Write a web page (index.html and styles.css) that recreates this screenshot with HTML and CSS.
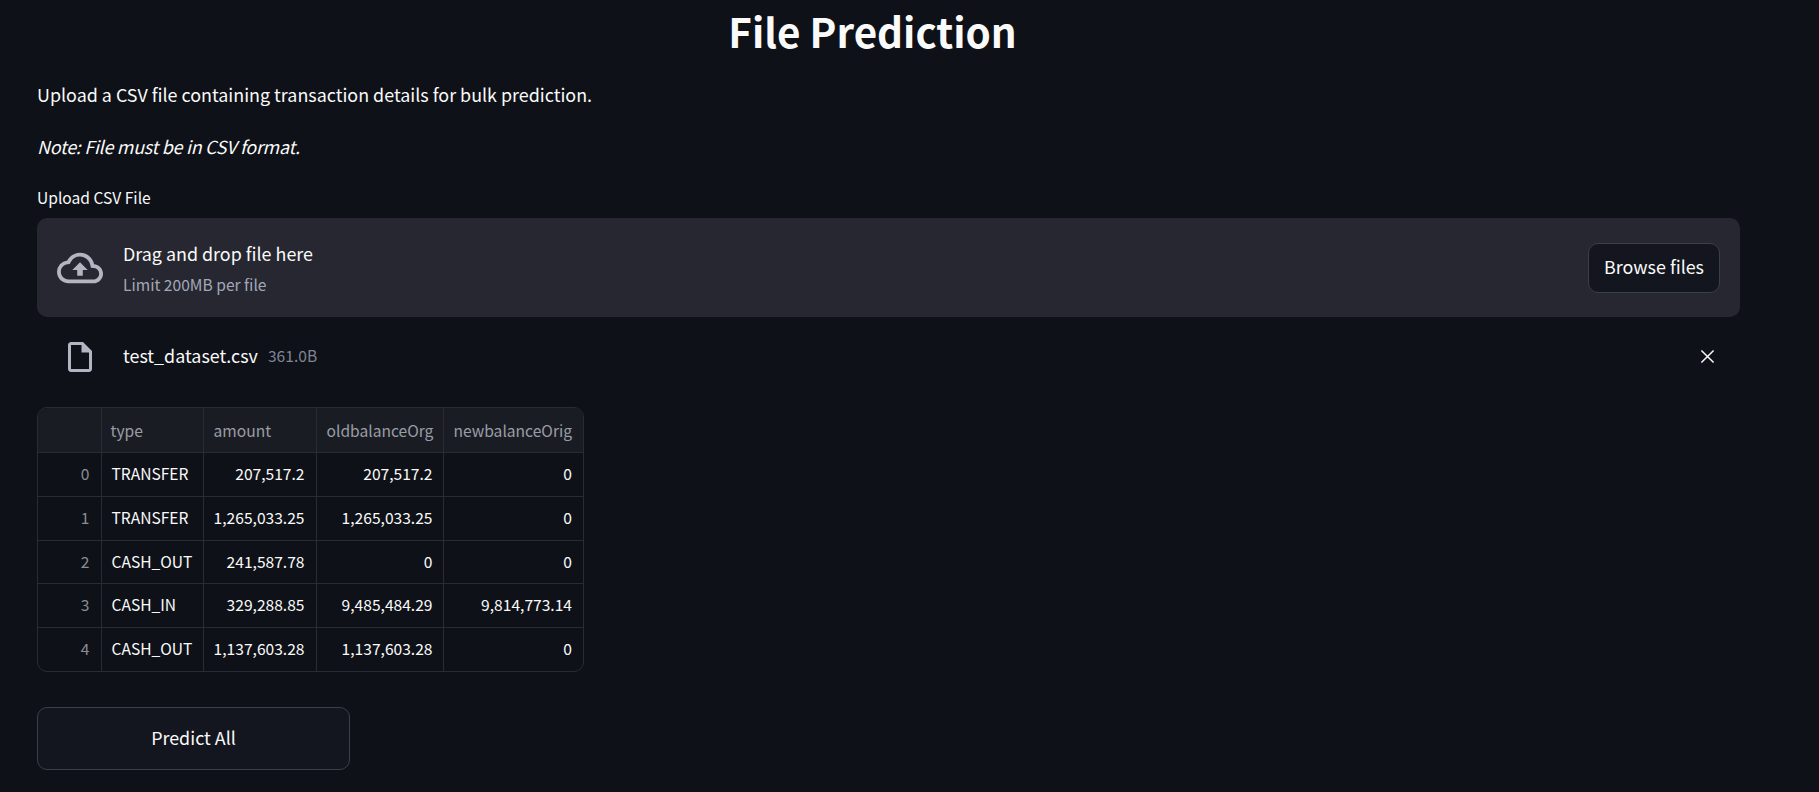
FILE: index.html
```html
<!DOCTYPE html>
<html>
<head>
  <title>File Prediction</title>
  <link rel="stylesheet" href="styles.css">
</head>
<body>
  <div class="container">
    <h1>File Prediction</h1>
    <p class="intro">Upload a CSV file containing transaction details for bulk prediction.</p>
    <p class="note">Note: File must be in CSV format.</p>

    <div class="upload-label">Upload CSV File</div>
    <div class="dropzone">
      <svg class="cloud-icon" viewBox="0 0 24 24" fill="#b3b6c2">
        <path d="M19.35 10.04A7.49 7.49 0 0 0 12 4C9.11 4 6.6 5.64 5.35 8.04A5.994 5.994 0 0 0 0 14c0 3.31 2.69 6 6 6h13c2.76 0 5-2.24 5-5 0-2.64-2.05-4.78-4.65-4.96zM19 18H6c-2.21 0-4-1.79-4-4 0-2.05 1.53-3.76 3.56-3.97l1.07-.11.5-.95A5.469 5.469 0 0 1 12 6c2.62 0 4.88 1.86 5.39 4.43l.3 1.5 1.53.11A2.98 2.98 0 0 1 22 15c0 1.65-1.35 3-3 3zM8 13h2.55v3h2.9v-3H16l-4-4z"/>
      </svg>
      <div class="drop-text">
        <div class="drop-title">Drag and drop file here</div>
        <div class="drop-limit">Limit 200MB per file</div>
      </div>
      <button class="browse-btn">Browse files</button>
    </div>

    <div class="file-row">
      <svg class="file-icon" viewBox="0 0 24 24" fill="#b3b6c2">
        <path d="M14 2H6c-1.1 0-2 .9-2 2v16c0 1.1.9 2 2 2h12c1.1 0 2-.9 2-2V8l-6-6zM6 20V4h7v5h5v11H6z"/>
      </svg>
      <span class="file-name">test_dataset.csv</span>
      <span class="file-size">361.0B</span>
      <svg class="close-icon" viewBox="0 0 16 16" stroke="#fafafa" stroke-width="1.6" fill="none">
        <path d="M1.5 1.5l13 13M14.5 1.5l-13 13"/>
      </svg>
    </div>

    <div class="table-wrap">
      <table class="data-table">
        <colgroup>
          <col class="col-index"><col class="col-type"><col class="col-amount"><col class="col-old"><col class="col-new">
        </colgroup>
        <thead>
          <tr><th></th><th>type</th><th>amount</th><th>oldbalanceOrg</th><th>newbalanceOrig</th></tr>
        </thead>
        <tbody>
          <tr><td class="idx">0</td><td>TRANSFER</td><td class="num">207,517.2</td><td class="num">207,517.2</td><td class="num">0</td></tr>
          <tr><td class="idx">1</td><td>TRANSFER</td><td class="num">1,265,033.25</td><td class="num">1,265,033.25</td><td class="num">0</td></tr>
          <tr class="short-row"><td class="idx">2</td><td>CASH_OUT</td><td class="num">241,587.78</td><td class="num">0</td><td class="num">0</td></tr>
          <tr><td class="idx">3</td><td>CASH_IN</td><td class="num">329,288.85</td><td class="num">9,485,484.29</td><td class="num">9,814,773.14</td></tr>
          <tr><td class="idx">4</td><td>CASH_OUT</td><td class="num">1,137,603.28</td><td class="num">1,137,603.28</td><td class="num">0</td></tr>
        </tbody>
      </table>
    </div>

    <button class="predict-btn">Predict All</button>
  </div>
</body>
</html>
```

FILE: styles.css
```css
body {
  background-color: #0e1117;
  color: #fafafa;
  font-family: "Noto Sans CJK SC", "Noto Sans", sans-serif;
  margin: 0;
  padding: 0;
  height: 792px;
  overflow: hidden;
}

.container {
  width: 1703px;
  margin-left: 37px;
}

h1 {
  margin: 0;
  height: 66px;
  line-height: 62px;
  padding-right: 32px;
  font-size: 40.4px;
  font-weight: 700;
  text-align: center;
}

.intro,
.note {
  margin: 0;
  font-size: 17.9px;
  line-height: 28px;
}

.intro {
  padding-top: 14px;
}

.note {
  padding-top: 24px;
  font-style: italic;
  letter-spacing: -0.25px;
}

.upload-label {
  font-size: 15.6px;
  line-height: 24px;
  margin-top: 25px;
  margin-bottom: 9px;
}

.dropzone {
  display: flex;
  align-items: center;
  height: 99px;
  box-sizing: border-box;
  padding: 0 20px 0 20px;
  background-color: #262730;
  border-radius: 10px;
}

.cloud-icon {
  width: 46px;
  height: 46px;
  flex-shrink: 0;
}

.drop-text {
  margin-left: 20px;
  flex: 1;
}

.drop-title {
  font-size: 17.9px;
  line-height: 28px;
  margin-top: -1px;
}

.drop-limit {
  font-size: 15.6px;
  line-height: 24px;
  margin-top: 5px;
  color: #a3a8b8;
}

.browse-btn {
  width: 132px;
  height: 50px;
  background-color: #13161e;
  color: #fafafa;
  border: 1px solid #3c3f4a;
  border-radius: 10px;
  font: inherit;
  font-size: 17.9px;
  padding: 0 0 3px;
}

.file-row {
  display: flex;
  align-items: center;
  height: 79px;
  padding-left: 25px;
}

.file-icon {
  width: 36px;
  height: 36px;
  flex-shrink: 0;
}

.file-name {
  margin-left: 25px;
  font-size: 17.9px;
  padding-bottom: 4px;
}

.file-size {
  margin-left: 10px;
  font-size: 15.6px;
  color: #808495;
  padding-bottom: 4px;
}

.close-icon {
  width: 15px;
  height: 15px;
  margin-left: auto;
  margin-right: 25px;
}

.table-wrap {
  width: 547px;
  margin-top: 11px;
  border: 1px solid #2a2c33;
  border-radius: 10px;
  box-sizing: border-box;
  overflow: hidden;
}

.data-table {
  border-collapse: collapse;
  table-layout: fixed;
  width: 545px;
  font-size: 15.6px;
}

.col-index { width: 63px; }
.col-type { width: 102px; }
.col-amount { width: 113px; }
.col-old { width: 127px; }
.col-new { width: 140px; }

th,
td {
  padding: 0 11px 2px 10px;
  border-right: 1px solid #2a2c33;
  border-bottom: 1px solid #2a2c33;
  text-align: left;
  white-space: nowrap;
  overflow: hidden;
  font-weight: 400;
}

th {
  padding-bottom: 0;
  background-color: #1a1c24;
  color: #9a9ca5;
}

th:last-child,
td:last-child {
  border-right: none;
}

th:nth-child(2) {
  padding-left: 9px;
}

td:nth-child(4) {
  padding-right: 10px;
}

tbody tr:last-child td {
  border-bottom: none;
}

thead tr {
  height: 44px;
}

tbody tr {
  height: 44px;
}

tbody .short-row {
  height: 43px;
}

.idx {
  text-align: right;
  color: #8b8d94;
}

.num {
  text-align: right;
}

.predict-btn {
  display: block;
  width: 313px;
  height: 63px;
  margin-top: 35px;
  background-color: #13161e;
  color: #fafafa;
  border: 1px solid #3c3f4a;
  border-radius: 10px;
  font: inherit;
  font-size: 17.9px;
  padding: 0 0 3px;
}
```
